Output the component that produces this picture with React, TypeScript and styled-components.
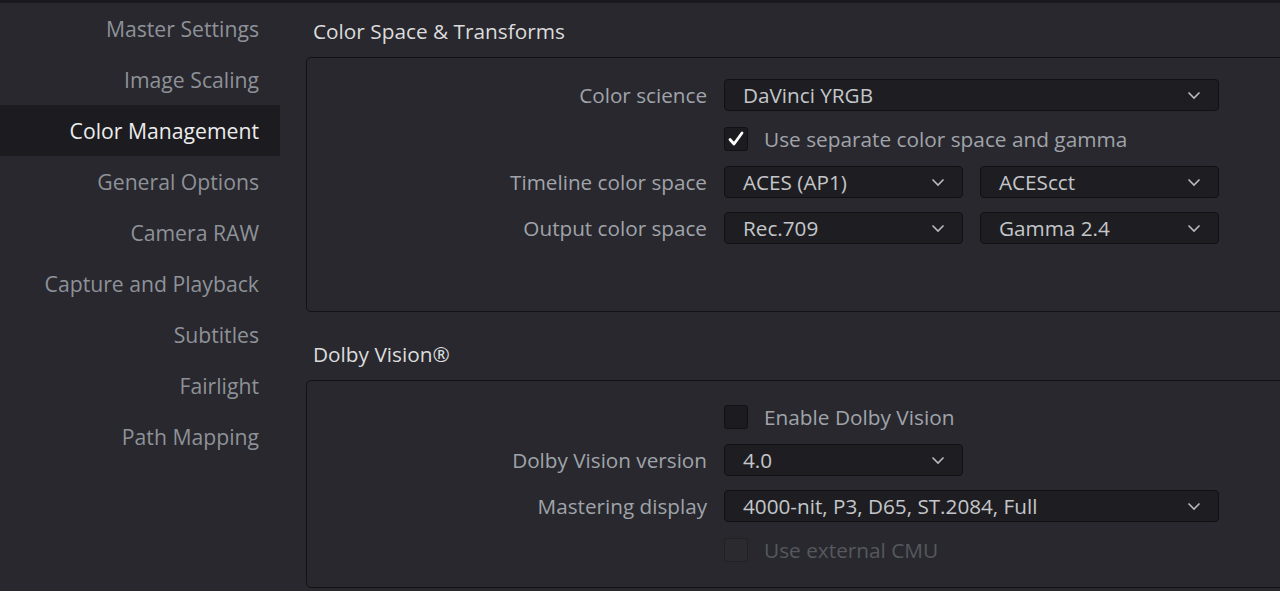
import React from "react";
import styled, {createGlobalStyle} from "styled-components";

const GlobalStyle = createGlobalStyle`
	html, body {
		margin: 0;
		padding: 0;
		background: #28282e;
		overflow: hidden;
	}
	body {
		font-family: "Open Sans", "Noto Sans", sans-serif;
	}
`;

const Page = styled.div`
	display: flex;
	height: 588px;
	border-top: 3px solid #1a1a1e;
	background: #28282e;
	overflow: hidden;
`;

const Sidebar = styled.nav`
	width: 280px;
	flex-shrink: 0;
	display: flex;
	flex-direction: column;
`;

const NavItem = styled.div<{ $active?: boolean }>`
	height: 51px;
	display: flex;
	align-items: center;
	justify-content: flex-end;
	padding-right: 21px;
	font-size: 21.2px;
	color: ${p => (p.$active ? "#ececec" : "#8e9298")};
	background: ${p => (p.$active ? "#1c1c20" : "transparent")};
`;

const Main = styled.main`
	flex: 1;
	padding-left: 26px;
	min-width: 0;
`;

const SectionTitle = styled.h2<{ $first?: boolean }>`
	margin: ${p => (p.$first ? "14px" : "28px")} 0 12px 7px;
	height: 28px;
	line-height: 28px;
	font-size: 20.8px;
	font-weight: 400;
	color: #dcdcdc;
`;

const Panel = styled.section<{ $padTop: number; $padBottom: number }>`
	width: 1000px;
	box-sizing: border-box;
	border: 1px solid #121214;
	border-radius: 5px;
	padding: ${p => p.$padTop}px 0 ${p => p.$padBottom}px;
	display: grid;
	grid-template-columns: 400px 239px 239px;
	column-gap: 17px;
	row-gap: 14px;
	align-items: center;
`;

const Label = styled.div`
	grid-column: 1;
	text-align: right;
	font-size: 20.7px;
	color: #a0a4aa;
	line-height: 32px;
`;

const Select = styled.div<{ $wide?: boolean }>`
	grid-column: ${p => (p.$wide ? "2 / span 2" : "auto")};
	height: 32px;
	box-sizing: border-box;
	border: 1px solid #111113;
	border-radius: 4px;
	background: #1e1e22;
	display: flex;
	align-items: center;
	justify-content: space-between;
	padding: 0 17px 0 18px;
	font-size: 20.7px;
	color: #c4c6ca;
`;

const CheckRow = styled.label<{ $disabled?: boolean }>`
	grid-column: 2 / span 2;
	height: 27px;
	display: flex;
	align-items: center;
	gap: 16px;
	font-size: 20.8px;
	color: ${p => (p.$disabled ? "#55585d" : "#a0a4aa")};
`;

const Box = styled.span<{ $disabled?: boolean }>`
	width: 24px;
	height: 24px;
	box-sizing: border-box;
	border: 1px solid ${p => (p.$disabled ? "#212125" : "#111113")};
	border-radius: 3px;
	background: ${p => (p.$disabled ? "#2a2a2f" : "#1c1c20")};
	display: flex;
	align-items: center;
	justify-content: center;
`;

function Chevron() {
	return (
		<svg width="14" height="9" viewBox="0 0 14 9">
			<path d="M1.5 1.5 L7 7 L12.5 1.5" fill="none" stroke="#b8bbbf" strokeWidth="1.6" />
		</svg>
	);
}

function Dropdown({value, wide}: { value: string; wide?: boolean }) {
	return (
		<Select $wide={wide}>
			<span>{value}</span>
			<Chevron />
		</Select>
	);
}

function Checkbox({label, checked, disabled}: { label: string; checked?: boolean; disabled?: boolean }) {
	return (
		<CheckRow $disabled={disabled}>
			<Box $disabled={disabled}>
				{checked && (
					<svg width="18" height="18" viewBox="0 0 18 18">
						<path d="M3 9.5 L7 14 L15 3" fill="none" stroke="#ffffff" strokeWidth="2.8" strokeLinecap="round" strokeLinejoin="round" />
					</svg>
				)}
			</Box>
			<span>{label}</span>
		</CheckRow>
	);
}

const navItems = [
	"Master Settings",
	"Image Scaling",
	"Color Management",
	"General Options",
	"Camera RAW",
	"Capture and Playback",
	"Subtitles",
	"Fairlight",
	"Path Mapping",
];

export default function App() {
	return (
		<>
			<GlobalStyle />
			<Page>
				<Sidebar>
					{navItems.map(item => (
						<NavItem key={item} $active={item === "Color Management"}>{item}</NavItem>
					))}
				</Sidebar>
				<Main>
					<SectionTitle $first>Color Space &amp; Transforms</SectionTitle>
					<Panel $padTop={21} $padBottom={67}>
						<Label>Color science</Label>
						<Dropdown value="DaVinci YRGB" wide />
						<Checkbox label="Use separate color space and gamma" checked />
						<Label>Timeline color space</Label>
						<Dropdown value="ACES (AP1)" />
						<Dropdown value="ACEScct" />
						<Label>Output color space</Label>
						<Dropdown value="Rec.709" />
						<Dropdown value="Gamma 2.4" />
					</Panel>

					<SectionTitle>Dolby Vision®</SectionTitle>
					<Panel $padTop={22} $padBottom={24}>
						<Checkbox label="Enable Dolby Vision" />
						<Label>Dolby Vision version</Label>
						<Dropdown value="4.0" />
						<Label>Mastering display</Label>
						<Dropdown value="4000-nit, P3, D65, ST.2084, Full" wide />
						<Checkbox label="Use external CMU" disabled />
					</Panel>
				</Main>
			</Page>
		</>
	);
}
